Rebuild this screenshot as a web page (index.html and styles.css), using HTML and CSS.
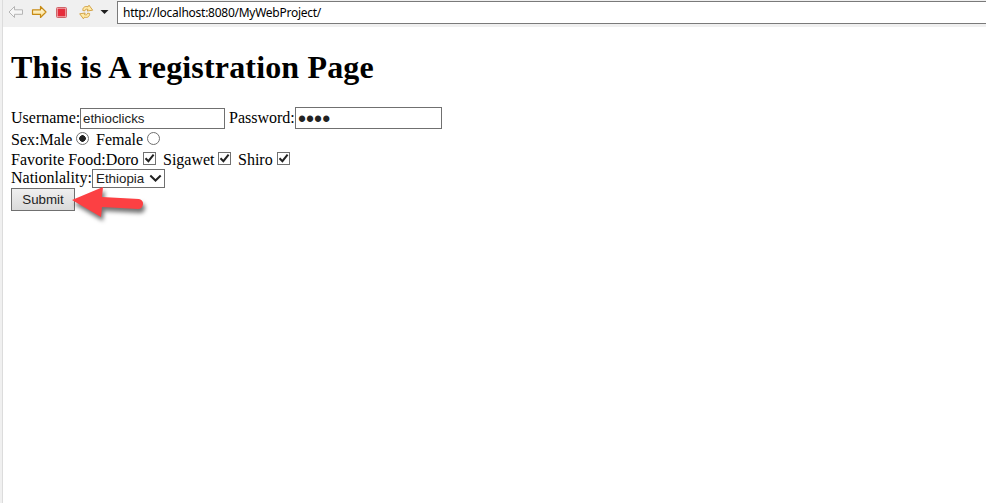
FILE: index.html
```html
<!DOCTYPE html>
<html lang="en">
<head>
<meta charset="utf-8">
<title>Registration</title>
<link rel="stylesheet" href="styles.css">
</head>
<body>
<header class="toolbar">
  <svg class="icons" width="115" height="26" viewBox="0 0 115 26">
    <defs>
      <linearGradient id="gold" x1="0" y1="0" x2="0" y2="1"><stop offset="0" stop-color="#fffdf0"/><stop offset="1" stop-color="#fbdc83"/></linearGradient>
    </defs>
    <path d="M9 12l5.500-5.500v3.300h8v4.500h-8v3.200z" fill="#f6f6f6" stroke="#b5b5b5" stroke-linejoin="round"/>
    <path d="M46 12l-5.500-5.500v3.300h-8v4.500h8v3.200z" fill="url(#gold)" stroke="#c78b16" stroke-width="1.2" stroke-linejoin="round"/>
    <rect x="56.500" y="7.500" width="10" height="10" rx="1" fill="#f3b5b8" stroke="#cf6468"/>
    <rect x="58" y="9" width="7" height="7" fill="#e62b3a" stroke="#dc3341" stroke-width=".6"/>
    <path d="M82.800 10.500C82.500 7.500 85 5.800 88 6.800l1-1.600 3.700 5-5.500.8.800-1.600c-1.800-.6-2.800-.2-3.200 1.500z" fill="#ffeaa6" stroke="#cf9c3c" stroke-width=".9" stroke-linejoin="round"/>
    <path d="M89.600 13.500c.3 3-2.200 4.700-5.200 3.700l-1 1.600-3.700-5 5.500-.8-.8 1.600c1.800.6 2.800.2 3.200-1.500z" fill="#ffeaa6" stroke="#cf9c3c" stroke-width=".9" stroke-linejoin="round"/>
    <path d="M100.500 10h8l-4 4z" fill="#1e1e1e"/>
  </svg>
  <div class="address">http://localhost:8080/MyWebProject/</div>
</header>
<main class="page">
  <h1>This is A registration Page</h1>
  <form>
    <div class="row row-login">
      <label for="user">Username:</label><input class="field user" id="user" type="text" value="ethioclicks">
      <label class="pass-label" for="pass">Password:</label><input class="field pass" id="pass" type="password" value="1234">
    </div>
    <div class="row row-sex">
      <span class="male">Sex:Male</span><input class="radio" type="radio" name="sex" checked>
      <span class="female">Female</span><input class="radio" type="radio" name="sex">
    </div>
    <div class="row row-food">
      <span class="doro">Favorite Food:Doro</span><svg class="check" viewBox="0 0 13 13"><rect x=".5" y=".5" width="12" height="12"/><path d="M2.500 6.300l2.900 2.900L10.600 2.700"/></svg>
      <span class="siga">Sigawet</span><svg class="check" viewBox="0 0 13 13"><rect x=".5" y=".5" width="12" height="12"/><path d="M2.500 6.300l2.900 2.900L10.600 2.700"/></svg>
      <span class="shiro">Shiro</span><svg class="check" viewBox="0 0 13 13"><rect x=".5" y=".5" width="12" height="12"/><path d="M2.500 6.300l2.900 2.900L10.600 2.700"/></svg>
    </div>
    <div class="row row-nation">
      <span class="nation">Nationlality:</span>
      <div class="select">Ethiopia<svg width="14" height="10" viewBox="0 0 14 10"><path d="M1.300 1.500l5.200 5 5.200-5"/></svg></div>
    </div>
    <div class="row row-submit">
      <button type="button">Submit</button>
      <svg class="arrow" width="86" height="44" viewBox="70 182 86 44">
        <path d="M72 200L103 187 102 197 139 199Q143.500 200 143 204.500 142 209 138 209L102 207 101 217z"/>
      </svg>
    </div>
  </form>
</main>
</body>
</html>
```
FILE: styles.css
```css
* { box-sizing: border-box; }
body {
  margin: 0;
  height: 503px;
  overflow: hidden;
  background: #fff;
  border-left: 2px solid #f0f0f0;
  color: #000;
  font: 16px/18px "Liberation Serif", serif;
}
.toolbar {
  display: flex;
  height: 27px;
  background: #f0f0f0;
  border-left: 1px solid #dcdcdc;
}
.icons { display: block; flex: none; width: 115px; margin-left: -3px; }
.address {
  flex: 1;
  height: 23px;
  margin: 1px 0 0 2px;
  padding-left: 5px;
  background: #fff;
  border: 1px solid #7a7a7a;
  border-right: 0;
  font: 12px/21px "Noto Sans", sans-serif;
  letter-spacing: -.26px;
}
.page {
  height: 476px;
  padding: 22px 0 0 8px;
  border-left: 1px solid #dcdcdc;
}
h1 {
  margin: 0 0 21px;
  font-size: 32px;
  line-height: 37px;
  letter-spacing: .16px;
  white-space: nowrap;
}
.row { display: flex; align-items: flex-start; white-space: nowrap; }
input { margin: 0; }
.field {
  appearance: none;
  border: 1px solid #707070;
  border-radius: 0;
  background: #fff;
  color: #222;
  padding: 0 2px;
  font: 13.33px "Liberation Sans", sans-serif;
  outline: 0;
}
.row-login { height: 24px; }
.row-login label { width: 69px; margin-top: 2px; }
.user { width: 145px; height: 21px; margin-top: 1px; }
.row-login .pass-label { width: 66px; margin-left: 4px; }
.pass { width: 147px; height: 22px; padding-top: 2px; font-size: 23px; }
.row-sex { height: 20px; }
.male { width: 65px; }
.female { width: 51px; margin-left: 7px; }
.radio {
  appearance: none;
  width: 13px;
  height: 13px;
  margin-top: 1px;
  border: 1px solid #707070;
  border-radius: 50%;
  background: #fff;
}
.radio:checked { background: radial-gradient(circle, #222 0 3px, #fff 3.6px); }
.row-food { height: 18px; }
.doro { width: 132px; }
.siga { width: 55px; margin-left: 7px; }
.shiro { width: 39px; margin-left: 7px; }
.check { width: 13px; height: 13px; margin-top: 1px; }
.check rect { fill: #fff; stroke: #707070; }
.check path { fill: none; stroke: #222; stroke-width: 2; }
.row-nation { height: 19px; }
.nation { width: 81px; }
.select {
  display: flex;
  justify-content: space-between;
  width: 73px;
  height: 19px;
  padding: 0 1px 0 3px;
  border: 1px solid #707070;
  color: #222;
  font: 13.33px/18px "Liberation Sans", sans-serif;
}
.select svg { margin-top: 4px; }
.select path { fill: none; stroke: #222; stroke-width: 2; }
button {
  width: 64px;
  height: 23px;
  padding: 0;
  border: 1px solid #707070;
  border-radius: 0;
  background: linear-gradient(#efefef, #dadada);
  color: #222;
  font: 13.33px "Liberation Sans", sans-serif;
}
.arrow { margin: -6px 0 0 -5px; flex: none; }
.arrow path { fill: #fc4043; filter: drop-shadow(2px 4px 2px rgba(0, 0, 0, .55)); }
```
